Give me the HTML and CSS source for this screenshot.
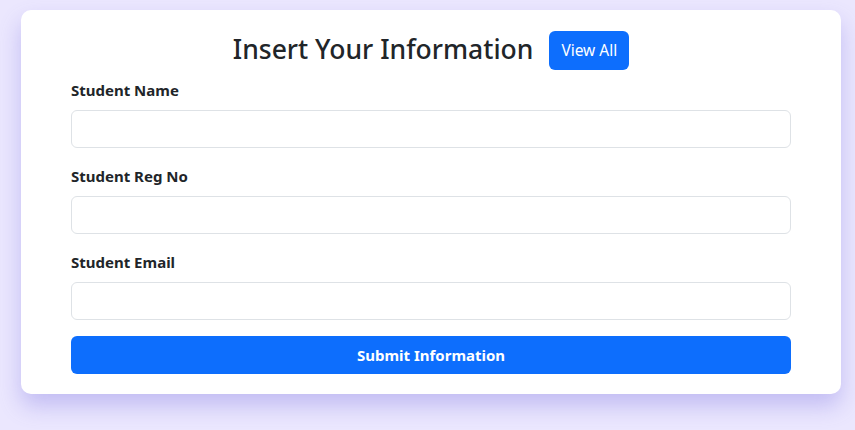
FILE: index.html
```html
<!DOCTYPE html>
<html lang="en">
<head>
<meta charset="utf-8">
<title>Insert Your Information</title>
<link rel="stylesheet" href="styles.css">
</head>
<body>
<div class="card">
  <div class="header">
    <h2 class="title">Insert Your Information</h2>
    <button class="btn btn-small" type="button">View All</button>
  </div>
  <form class="form">
    <label class="label" for="name">Student Name</label>
    <input class="input" id="name" type="text">
    <label class="label" for="reg">Student Reg No</label>
    <input class="input" id="reg" type="text">
    <label class="label" for="email">Student Email</label>
    <input class="input" id="email" type="email">
    <button class="btn btn-submit" type="button">Submit Information</button>
  </form>
</div>
</body>
</html>
```
FILE: styles.css
```css
* { box-sizing: border-box; }
html, body { height: 100%; }
body {
  margin: 0;
  background: #ebe7fe;
  font-family: "Noto Sans", "Open Sans", sans-serif;
  color: #212529;
  padding: 10px 14px 0 21px;
  overflow: hidden;
}
.card {
  background: #fff;
  border-radius: 10px;
  padding: 20px 50px 20px;
  box-shadow: 0 12px 22px rgba(110, 100, 220, 0.32);
}
.header {
  display: flex;
  justify-content: center;
  align-items: center;
  gap: 16px;
  height: 40px;
  margin-bottom: 8px;
}
.title {
  margin: 0;
  font-size: 26.5px;
  font-weight: 500;
  line-height: 1.2;
}
.btn {
  border: none;
  background: #0d6efd;
  color: #fff;
  border-radius: 6px;
  font-family: inherit;
  font-size: 16px;
  line-height: 24px;
  cursor: pointer;
}
.btn-small {
  padding: 7px 12px 8px;
  font-size: 15.5px;
}
.form {
  display: flex;
  flex-direction: column;
}
.label {
  font-weight: 700;
  font-size: 15px;
  line-height: 24px;
  margin-bottom: 8px;
}
.input {
  height: 38px;
  border: 1px solid #dee2e6;
  border-radius: 6px;
  margin-bottom: 16px;
  font-family: inherit;
  font-size: 16px;
  padding: 6px 12px;
}
.btn-submit {
  height: 38px;
  font-weight: 700;
  font-size: 15px;
  width: 100%;
}
```
